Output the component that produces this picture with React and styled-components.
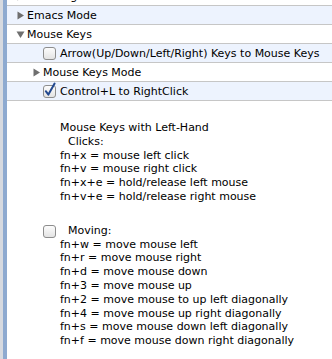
import styled, { createGlobalStyle } from "styled-components"

const Global = createGlobalStyle`
    html, body {
        margin: 0;
        padding: 0;
        background: #fff;
    }
    body {
        font-family: "DejaVu Sans", "Liberation Sans", sans-serif;
        font-size: 11px;
        color: #000;
        overflow: hidden;
    }
`

const Frame = styled.div`
    display: flex;
    width: 332px;
    height: 359px;
    overflow: hidden;
`

const Edge = styled.div`
    width: 3px;
    flex: none;
    background: #d7dae0;
    border-right: 4px solid #8eaad0;
`

const Tree = styled.div`
    flex: 1;
    display: flex;
    flex-direction: column;
    margin-top: -13px;
`

const Row = styled.div`
    height: 18px;
    border-bottom: 1px solid #c6c6c6;
    background: ${p => (p.$alt ? "#edf3fe" : "#fff")};
    display: flex;
    align-items: center;
    padding-left: ${p => p.$indent}px;
    white-space: nowrap;
`

const Toggle = styled.span`
    width: 10px;
    height: 10px;
    display: flex;
    align-items: center;
    justify-content: center;
    margin-right: 2px;
`

const Label = styled.span`
    padding-top: 1px;
`

const Box = styled.span`
    width: 13px;
    height: 13px;
    display: flex;
    margin-right: 4px;
    margin-bottom: ${p => p.$lift || 0}px;
    flex: none;
`

const Panel = styled.div`
    display: flex;
    align-items: center;
    padding: 20px 0 0 36px;
`

const Notes = styled.div`
    display: flex;
    flex-direction: column;
    white-space: pre;
    line-height: 13.8px;
`

const Line = styled.div`
    padding-left: ${p => (p.$sub ? 8 : 0)}px;
`

const Blank = styled.div`
    height: 20px;
`

const Arrow = ({ open }) => (
    <Toggle>
        <svg width="9" height="9" viewBox="0 0 9 9">
            {open
                ? <polygon points="0.5,1.5 8.5,1.5 4.5,8" fill="#6f6f6f" />
                : <polygon points="1.5,0.5 8,4.5 1.5,8.5" fill="#6f6f6f" />}
        </svg>
    </Toggle>
)

const Check = ({ checked, lift }) => (
    <Box $lift={lift}>
        <svg width="13" height="13" viewBox="0 0 13 13" style={{ overflow: "visible" }}>
            <defs>
                <linearGradient id="cb" x1="0" y1="0" x2="0" y2="1">
                    <stop offset="0" stopColor="#fdfdfd" />
                    <stop offset="0.5" stopColor="#f0f0f0" />
                    <stop offset="1" stopColor="#e2e2e2" />
                </linearGradient>
            </defs>
            <rect x="0.5" y="0.5" width="12" height="12" rx="2.5" fill="url(#cb)" stroke="#8d8d8d" />
            {checked && (
                <path d="M2.8 6.2 L5.4 9.6 L11.6 -1.4" fill="none" stroke="#22488f" strokeWidth="2" strokeLinecap="round" strokeLinejoin="round" />
            )}
        </svg>
    </Box>
)

const clicks = [
    "fn+x = mouse left click",
    "fn+v = mouse right click",
    "fn+x+e = hold/release left mouse",
    "fn+v+e = hold/release right mouse",
]

const moving = [
    "fn+w = move mouse left",
    "fn+r = move mouse right",
    "fn+d = move mouse down",
    "fn+3 = move mouse up",
    "fn+2 = move mouse to up left diagonally",
    "fn+4 = move mouse up right diagonally",
    "fn+s = move mouse down left diagonally",
    "fn+f = move mouse down right diagonally",
]

const App = () => {
    return (
        <Frame>
            <Global />
            <Edge />
            <Tree>
                <Row $indent={8}>
                    <Arrow />
                    <Label>Browsing Mode</Label>
                </Row>
                <Row $alt $indent={8}>
                    <Arrow />
                    <Label>Emacs Mode</Label>
                </Row>
                <Row $indent={8}>
                    <Arrow open />
                    <Label>Mouse Keys</Label>
                </Row>
                <Row $alt $indent={36}>
                    <Check />
                    <Label>Arrow(Up/Down/Left/Right) Keys to Mouse Keys</Label>
                </Row>
                <Row $indent={24}>
                    <Arrow />
                    <Label>Mouse Keys Mode</Label>
                </Row>
                <Row $alt $indent={36}>
                    <Check checked />
                    <Label>Control+L to RightClick</Label>
                </Row>
                <Panel>
                    <Check lift={5} />
                    <Notes>
                        <Line>Mouse Keys with Left-Hand</Line>
                        <Line $sub>Clicks:</Line>
                        {clicks.map((c, i) => <Line key={i}>{c}</Line>)}
                        <Blank />
                        <Line $sub>Moving:</Line>
                        {moving.map((m, i) => <Line key={i}>{m}</Line>)}
                    </Notes>
                </Panel>
            </Tree>
        </Frame>
    )
}

export default App
